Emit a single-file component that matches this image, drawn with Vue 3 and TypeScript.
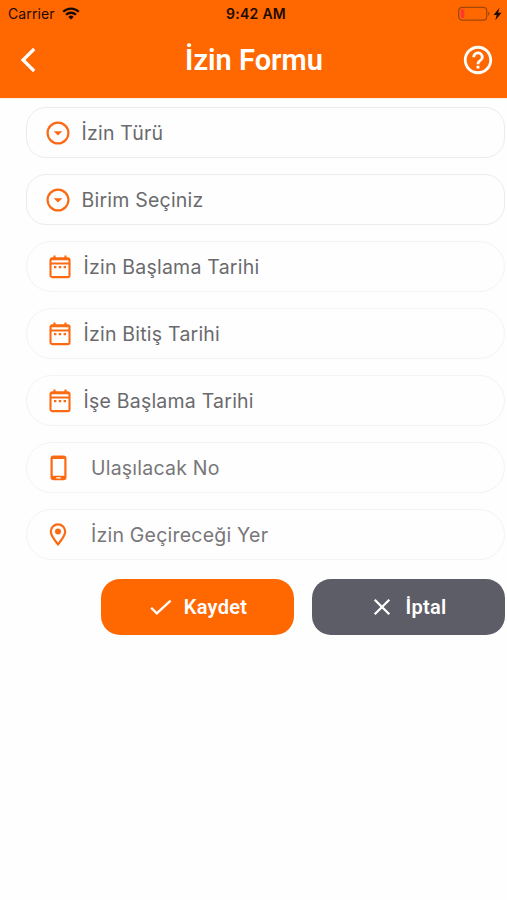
<script setup lang="ts">
type IconName = 'select' | 'calendar' | 'phone' | 'pin'

interface Field {
  label: string
  icon: IconName
}

const fields: Field[] = [
  { label: 'İzin Türü', icon: 'select' },
  { label: 'Birim Seçiniz', icon: 'select' },
  { label: 'İzin Başlama Tarihi', icon: 'calendar' },
  { label: 'İzin Bitiş Tarihi', icon: 'calendar' },
  { label: 'İşe Başlama Tarihi', icon: 'calendar' },
  { label: 'Ulaşılacak No', icon: 'phone' },
  { label: 'İzin Geçireceği Yer', icon: 'pin' },
]
</script>

<template>
  <div class="screen">
    <header class="top">
      <div class="status">
        <div class="status-side">
          <span class="carrier">Carrier</span>
          <svg width="18" height="13" viewBox="0 0 18 13">
            <g fill="none" stroke="#1c0b00" stroke-width="2.3">
              <path d="M1.2 4.8a11.1 11.1 0 0 1 15.6 0" />
              <path d="M4 7.8a7.1 7.1 0 0 1 10 0" />
            </g>
            <path d="M9 12.6 6.3 9.9a3.9 3.9 0 0 1 5.4 0Z" fill="#1c0b00" />
          </svg>
        </div>
        <span class="clock">9:42 AM</span>
        <div class="status-side end">
          <svg width="46" height="16" viewBox="0 0 46 16">
            <rect x=".7" y="1.3" width="28" height="12.8" rx="3.4" fill="none" stroke="#a54708" stroke-width="1.3" />
            <rect x="2.7" y="3.3" width="3.6" height="8.8" rx="1" fill="#fb3b30" />
            <path d="M30.2 5.6c1.8.6 1.8 3.6 0 4.2Z" fill="#a54708" />
            <path d="M41.500 1.700 35.500 9h3.200L37.300 14.200l6.300-7.500h-3.500Z" fill="#1c0b00" />
          </svg>
        </div>
      </div>
      <div class="bar">
        <button class="icon-button" aria-label="Geri">
          <svg width="18" height="28" viewBox="0 0 18 28">
            <path d="M15.2 3 4 14l11.2 11" fill="none" stroke="#fff" stroke-width="3.2" />
          </svg>
        </button>
        <h1 class="title">İzin Formu</h1>
        <button class="icon-button" aria-label="Yardım">
          <svg width="34" height="34" viewBox="0 0 24 24" fill="#fff">
            <path d="M11 18h2v-2h-2v2zm1-16C6.48 2 2 6.48 2 12s4.48 10 10 10 10-4.48 10-10S17.52 2 12 2zm0 18c-4.41 0-8-3.59-8-8s3.59-8 8-8 8 3.59 8 8-3.59 8-8 8zm0-14c-2.21 0-4 1.79-4 4h2c0-1.1.9-2 2-2s2 .9 2 2c0 2-3 1.75-3 5h2c0-2.25 3-2.5 3-5 0-2.21-1.79-4-4-4z" />
          </svg>
        </button>
      </div>
    </header>

    <main class="form">
      <div v-for="field in fields" :key="field.label" class="field" :class="field.icon">
        <span class="field-icon">
          <svg v-if="field.icon === 'select'" width="24" height="24" viewBox="0 0 24 24">
            <circle cx="12" cy="12" r="10.4" fill="none" stroke="#fb6a12" stroke-width="2.2" />
            <path d="M7.7 10.3h8.6L12 14.5Z" fill="#fb6a12" />
          </svg>
          <svg v-else-if="field.icon === 'calendar'" width="22" height="24" viewBox="0 0 22 24">
            <rect x="1.5" y="3.3" width="19" height="18.8" rx="1.7" fill="none" stroke="#fb6a12" stroke-width="2.1" />
            <path d="M1.6 4.2h18.8M1.6 8.5h18.8M5.5 .5v3M16.5 .5v3" stroke="#fb6a12" stroke-width="2.1" />
            <path d="M5 12.2h2.4M9.8 12.2h2.4M14.6 12.2H17" stroke="#fb6a12" stroke-width="2.2" />
          </svg>
          <svg v-else-if="field.icon === 'phone'" width="17" height="26" viewBox="0 0 17 26">
            <path fill-rule="evenodd" d="M3.5 .5h10a3 3 0 0 1 3 3v18.8a3 3 0 0 1-3 3h-10a3 3 0 0 1-3-3V3.5a3 3 0 0 1 3-3ZM2.7 4v16.8h11.6V4ZM6.2 22.3v1.3h4.6v-1.3Z" fill="#fb6a12" />
          </svg>
          <svg v-else width="18" height="24" viewBox="0 0 18 24">
            <path d="M9 1.4a7.2 7.2 0 0 0-7.2 7.2C1.8 13.2 6.5 18.1 9 21.3c2.5-3.2 7.2-8.1 7.2-12.7A7.2 7.2 0 0 0 9 1.4Z" fill="none" stroke="#fb6a12" stroke-width="2.2" />
            <circle cx="9" cy="8.6" r="3" fill="#fb6a12" />
          </svg>
        </span>
        <span class="label">{{ field.label }}</span>
      </div>

      <div class="actions">
        <button class="action save">
          <svg width="22" height="18" viewBox="0 0 22 18">
            <path d="m1.2 9.7 5.6 5.6L20.6 2.6" fill="none" stroke="#fff" stroke-width="2.3" />
          </svg>
          <span>Kaydet</span>
        </button>
        <button class="action cancel">
          <svg width="18" height="18" viewBox="0 0 18 18">
            <path d="m1.7 1.7 14.6 14.6M16.3 1.7 1.7 16.3" fill="none" stroke="#fff" stroke-width="2.3" />
          </svg>
          <span>İptal</span>
        </button>
      </div>
    </main>
  </div>
</template>

<style>
body {
  margin: 0;
  background: #fefefe;
}
</style>

<style scoped>
.screen {
  min-height: 900px;
  box-sizing: border-box;
  background: #fefefe;
  font-family: Inter, "Liberation Sans", sans-serif;
}

svg {
  display: block;
  flex: none;
}

button {
  padding: 0;
  border: 0;
  background: none;
  font: inherit;
}

.top {
  height: 99px;
  background: #ff6700;
  border-bottom: 1px solid #fff1df;
  box-sizing: border-box;
}

.status {
  display: grid;
  grid-template-columns: 1fr auto 1fr;
  align-items: center;
  height: 27px;
  padding: 0 3px 0 8px;
  color: #1c0b00;
}

.status-side {
  display: flex;
  align-items: center;
  gap: 7px;
}

.status-side.end {
  justify-content: flex-end;
}

.carrier {
  font-size: 14px;
  letter-spacing: 0.1px;
}

.clock {
  font-size: 14px;
  font-weight: 600;
  letter-spacing: 0.3px;
}

.bar {
  display: grid;
  grid-template-columns: 28px 1fr 34px;
  align-items: center;
  height: 66px;
  padding: 0 12px 0 19px;
}

.icon-button {
  display: flex;
}

.title {
  margin: 0;
  color: #fff;
  text-align: center;
  font-family: Roboto, sans-serif;
  font-size: 29px;
  font-weight: 600;
  line-height: 34px;
}

.form {
  display: flex;
  flex-direction: column;
  gap: 16px;
  padding: 8px 2px 0 26px;
}

.field {
  display: flex;
  align-items: center;
  height: 51px;
  box-sizing: border-box;
  padding-left: 19px;
  border: 1px solid #f3f3f4;
  border-radius: 26px;
  color: #6a6a6d;
}

.field.select {
  border-color: #ebecef;
  border-radius: 20px;
}

.field-icon {
  display: flex;
  justify-content: center;
  width: 24px;
}

.label {
  margin-left: 11.5px;
  font-size: 19.5px;
  letter-spacing: 0.22px;
  line-height: 24px;
  white-space: nowrap;
}

.calendar .field-icon {
  margin-left: 2px;
}

.phone .label,
.pin .label {
  margin-left: 21px;
  color: #77777a;
}

.actions {
  display: grid;
  grid-template-columns: 193px 193px;
  justify-content: end;
  gap: 18px;
  margin-top: 3px;
}

.action {
  display: flex;
  align-items: center;
  justify-content: center;
  gap: 12px;
  height: 56px;
  border-radius: 19px;
  color: #fff;
  font-family: Roboto, sans-serif;
  font-size: 20px;
  font-weight: 600;
  letter-spacing: 0.3px;
}

.save {
  padding-left: 2px;
  background: #ff6700;
}

.cancel {
  gap: 14px;
  padding-left: 3px;
  background: #5d5d67;
}
</style>
